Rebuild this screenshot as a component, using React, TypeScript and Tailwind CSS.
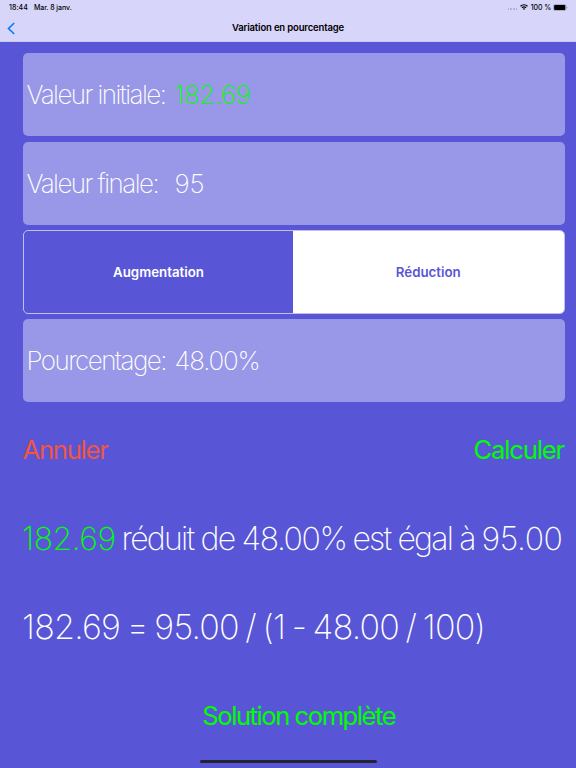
import { useState } from "react";

function StatusBar() {
  return (
    <div className="flex h-[14px] items-center justify-between pl-[9px] pr-[8px] text-[7px] font-medium leading-none text-black">
      <div className="flex gap-[6px]">
        <span className="tracking-[0.05px]">18:44</span>
        <span className="tracking-[-0.05px]">Mar. 8 janv.</span>
      </div>
      <div className="flex items-center">
        <div className="mr-[2.5px] mt-[4px] flex gap-[1px]">
          <span className="size-[1.6px] rounded-full bg-[#a9a7c4]"></span>
          <span className="size-[1.6px] rounded-full bg-[#a9a7c4]"></span>
          <span className="size-[1.6px] rounded-full bg-[#a9a7c4]"></span>
          <span className="size-[1.6px] rounded-full bg-[#a9a7c4]"></span>
        </div>
        <svg className="mr-[3px] h-[6px] w-[8px]" viewBox="0 0 16 12" fill="none" stroke="#000" strokeWidth="2.6">
          <path d="M1 4.6a10 10 0 0 1 14 0" />
          <path d="M3.8 7.8a6 6 0 0 1 8.4 0" />
          <path d="M8 12L5.6 9.6a3.4 3.4 0 0 1 4.8 0z" fill="#000" stroke="none" />
        </svg>
        <span className="mr-[2px] tracking-[-0.1px]">100 %</span>
        <svg className="h-[7px] w-[15px]" viewBox="0 0 15 7">
          <rect x="0.4" y="0.4" width="12.6" height="6.2" rx="1.7" fill="none" stroke="#8b89a6" strokeWidth="0.6" />
          <rect x="1.1" y="1.1" width="11.2" height="4.8" rx="1" fill="#000" />
          <path d="M13.7 2.5v2q.8-.3.8-1t-.8-1z" fill="#8b89a6" />
        </svg>
      </div>
    </div>
  );
}

function Field({ label, value, valueClass }: { label: string; value: string; valueClass: string }) {
  return (
    <div className="flex items-center rounded-[5px] bg-[#9997e7] pl-[3.5px] text-[26px] font-extralight">
      <span className="w-[148px] whitespace-nowrap tracking-[-1.56px]">{label}</span>
      <span className={valueClass}>{value}</span>
    </div>
  );
}

function App() {
  const [mode, setMode] = useState("Réduction");

  return (
    <div className="flex h-[768px] w-[576px] flex-col overflow-hidden bg-[#5856d6] font-['Inter',sans-serif] text-white">
      {/* Navigation */}
      <header className="h-[42px] border-b border-[#c9c7ec] bg-[#d7d5f9]">
        <StatusBar />
        <div className="grid h-[28px] grid-cols-[1fr_auto_1fr] items-center">
          <button className="pl-[7px]">
            <svg className="h-[13px] w-[8px]" viewBox="0 0 8 13" fill="none" stroke="#007aff" strokeWidth="1.6">
              <path d="M7.2 1L1.5 6.5L7.2 12" />
            </svg>
          </button>
          <h1 className="pt-px text-[9.5px] font-semibold tracking-[-0.16px] text-black">Variation en pourcentage</h1>
        </div>
      </header>

      <main className="ml-[23px] mr-[11.5px] mt-[11px] grid auto-rows-[83.3px] grid-cols-[minmax(0,1fr)] gap-[5.35px]">
        <Field label="Valeur initiale:" value="182.69" valueClass="tracking-[-0.4px] text-[#00ff00]" />
        <Field label="Valeur finale:" value="95" valueClass="tracking-[-0.2px]" />

        <div className="grid grid-cols-[269px_1fr] overflow-hidden rounded-[5px] border border-[#c0bff0] text-[13.3px] font-semibold">
          {["Augmentation", "Réduction"].map((item) => (
            <button
              key={item}
              onClick={() => setMode(item)}
              className={mode === item ? "bg-white pt-[2px] text-[#5856d6]" : "pt-[2px]"}
            >
              {item}
            </button>
          ))}
        </div>

        <Field label="Pourcentage:" value="48.00%" valueClass="tracking-[-1.2px]" />

        {/* Actions */}
        <div className="flex items-center justify-between pr-[0.5px] pt-[2px] text-[25.6px]">
          <button className="-ml-[0.5px] tracking-[-1.25px] text-[#f0553f]">Annuler</button>
          <button className="tracking-[-1.15px] text-[#00ff00]">Calculer</button>
        </div>

        {/* Result */}
        <p className="flex items-center whitespace-nowrap pt-[2px] text-[32px] font-extralight">
          <span className="-ml-px w-[99.5px] tracking-[-0.5px] text-[#00ff00]">182.69</span>
          <span className="w-[120px] tracking-[-1.75px]">réduit de</span>
          <span className="w-[111px] tracking-[-1.4px]">48.00%</span>
          <span className="w-[129px] tracking-[-1.8px]">est égal à</span>
          <span className="tracking-[-0.4px]">95.00</span>
        </p>
        <p className="-ml-px flex items-center whitespace-nowrap text-[34px] font-extralight tracking-[-0.75px] [word-spacing:-2.3px]">
          182.69 = 95.00 / (1 - 48.00 / 100)
        </p>
        <button className="pl-[10px] pt-[2px] text-center text-[25.6px] tracking-[-1.45px] text-[#00ff00]">
          Solution complète
        </button>
      </main>

      <div className="mx-auto mt-[3px] h-[3px] w-[177px] shrink-0 rounded-full bg-[#252432]"></div>
    </div>
  );
}

export default App;
